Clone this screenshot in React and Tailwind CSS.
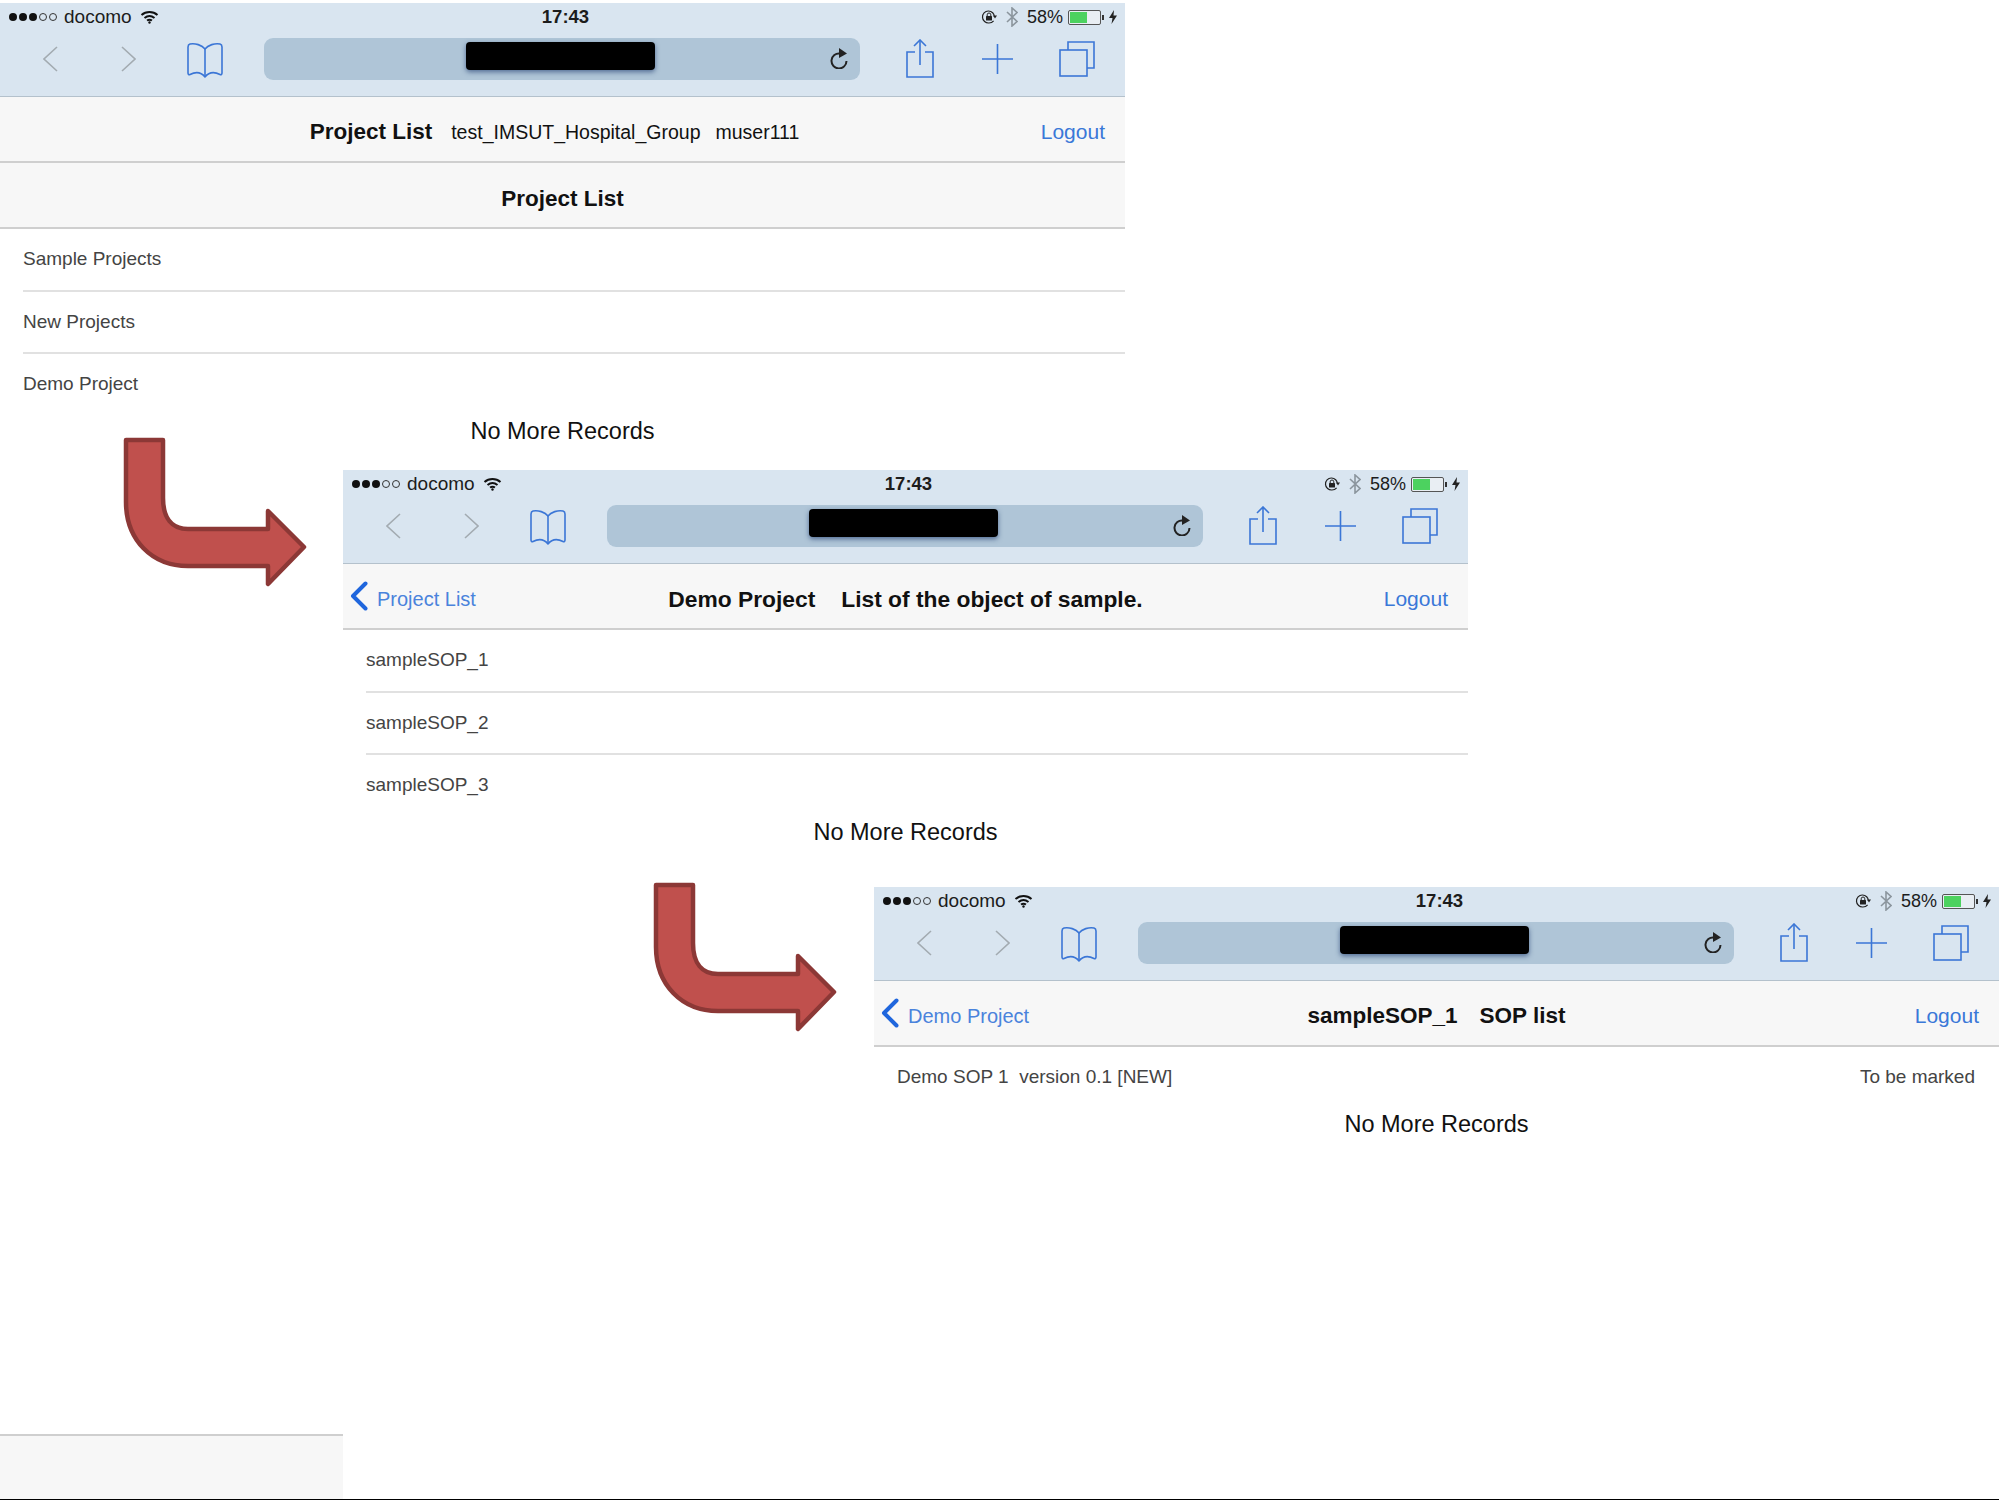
import React from "react";

const ChevronIcon = ({ flip = false }) => (
  <svg width="15" height="26" viewBox="0 0 15 26" fill="none" stroke="#a3abb1" strokeWidth="1.6">
    <polyline points={flip ? "1,1 14,13 1,25" : "14,1 1,13 14,25"} />
  </svg>
);

const BookIcon = () => (
  <svg width="38" height="38" viewBox="0 0 38 38" fill="none" stroke="#3b76d6" strokeWidth="1.6" strokeLinejoin="round">
    <path d="M19 7C16 3 9 1 4 2C2.500 2.500 2 3 2 5V31C2 32.500 3 33 4 32.500C9 30 15 30 19 35C23 30 29 30 34 32.500C35 33 36 32.500 36 31V5C36 3 35.500 2.500 34 2C29 1 22 3 19 7Z" />
    <path d="M19 7V35" />
  </svg>
);

const ReloadIcon = () => (
  <svg width="20" height="22" viewBox="0 0 20 22" fill="none">
    <path d="M11 6.500A7.500 7.500 0 1 0 17.500 14" stroke="#222" strokeWidth="2" />
    <polygon points="10,1 18,6.500 10,11" fill="#222" />
  </svg>
);

const ShareIcon = () => (
  <svg width="28" height="39" viewBox="0 0 28 39" fill="none" stroke="#3b76d6" strokeWidth="1.6">
    <path d="M9 13H1V38H27V13H19" />
    <path d="M14 1V26" />
    <path d="M8 7L14 1L20 7" />
  </svg>
);

const PlusIcon = () => (
  <svg width="31" height="30" viewBox="0 0 31 30" fill="none" stroke="#3b76d6" strokeWidth="1.6">
    <path d="M0 15H31M15.500 0V30" />
  </svg>
);

const TabsIcon = () => (
  <svg width="36" height="36" viewBox="0 0 36 36" fill="none" stroke="#3b76d6" strokeWidth="1.6">
    <rect x="1" y="9" width="27" height="26" />
    <path d="M9 9V1H35V27H28" />
  </svg>
);

const WifiIcon = () => (
  <svg width="19" height="14" viewBox="0 0 18 14" fill="none" stroke="#111" strokeWidth="2">
    <path d="M1 5C5.500 1 12.500 1 17 5" />
    <path d="M4 8C7 5.500 11 5.500 14 8" />
    <path d="M6.500 10.500C8 9.500 10 9.500 11.500 10.500" />
    <circle cx="9" cy="12.500" r="1.200" fill="#111" stroke="none" />
  </svg>
);

const RotationLockIcon = () => (
  <svg width="16" height="16" viewBox="0 0 16 16" fill="none">
    <path d="M13.500 8A6 6 0 1 0 8 14C10 14 11.500 13.200 12.600 11.800" stroke="#222" strokeWidth="1.2" />
    <polygon points="12,6.500 16,6.500 14,9.500" fill="#222" />
    <rect x="5" y="7" width="6" height="4.500" rx="0.5" fill="#222" />
    <path d="M6.200 7V5.800A1.800 1.800 0 0 1 9.800 5.800V7" stroke="#222" strokeWidth="1" />
  </svg>
);

const BluetoothIcon = () => (
  <svg width="12" height="20" viewBox="0 0 12 20" fill="none" stroke="#8b959d" strokeWidth="1.6">
    <path d="M1 5L11 14.500L6 19V1L11 5.500L1 15" />
  </svg>
);

const BoltIcon = () => (
  <svg width="8" height="14" viewBox="0 0 8 14" fill="#222">
    <polygon points="5,0 0,8 3.500,8 2.500,14 8,5.500 4.500,5.500" />
  </svg>
);

const Battery = () => (
  <div className="flex items-center">
    <div className="w-[33px] h-[15px] border border-[#555] rounded-[2px] p-px bg-[#e9eef3]">
      <div className="h-full w-[58%] bg-[#4cd25f]" />
    </div>
    <div className="w-[2px] h-[5px] bg-[#333] ml-px" />
  </div>
);

const SignalDots = () => (
  <div className="flex items-center gap-[2px]">
    <span className="w-[8px] h-[8px] rounded-full bg-[#111]" />
    <span className="w-[8px] h-[8px] rounded-full bg-[#111]" />
    <span className="w-[8px] h-[8px] rounded-full bg-[#111]" />
    <span className="w-[8px] h-[8px] rounded-full border border-[#333]" />
    <span className="w-[8px] h-[8px] rounded-full border border-[#333]" />
  </div>
);

const BrowserChrome = () => (
  <div className="h-[94px] bg-[#d9e5f0] border-b border-[#b4c1cc]">
    <div className="h-[28px] grid grid-cols-[1fr_auto_1fr] items-center text-[18px] text-[#1c1c1c] pl-[9px] pr-[8px]">
      <div className="flex items-center">
        <SignalDots />
        <span className="ml-[7px] text-[19px]">docomo</span>
        <span className="ml-[8px]">
          <WifiIcon />
        </span>
      </div>
      <div className="font-bold text-[18.500px] pl-[5px]">17:43</div>
      <div className="flex items-center justify-end">
        <RotationLockIcon />
        <span className="ml-[9px]">
          <BluetoothIcon />
        </span>
        <span className="ml-[9px]">58%</span>
        <span className="ml-[5px]">
          <Battery />
        </span>
        <span className="ml-[5px]">
          <BoltIcon />
        </span>
      </div>
    </div>
    <div className="mt-[7px] h-[42px] flex items-center pl-[43px]">
      <ChevronIcon />
      <div className="ml-[63px]">
        <ChevronIcon flip />
      </div>
      <div className="ml-[50px] mt-[4px]">
        <BookIcon />
      </div>
      <div className="ml-[40px] w-[596px] h-[42px] rounded-[9px] bg-[#afc5d7] flex items-start">
        <div className="ml-[202px] mt-[4px] w-[189px] h-[28px] rounded-[4px] bg-black shadow-[0_2px_5px_rgba(30,60,110,0.65)]" />
        <div className="ml-auto mr-[11px] mt-[9px]">
          <ReloadIcon />
        </div>
      </div>
      <div className="ml-[46px] mb-[2px]">
        <ShareIcon />
      </div>
      <div className="ml-[48px]">
        <PlusIcon />
      </div>
      <div className="ml-[46px]">
        <TabsIcon />
      </div>
    </div>
  </div>
);

const BackLink = ({ label }) => (
  <a className="flex items-center pl-[7px] text-[20px] text-[#4a83dc]">
    <svg width="18" height="30" viewBox="0 0 18 30" fill="none" stroke="#1f66dd" strokeWidth="4" strokeLinecap="round" strokeLinejoin="round">
      <polyline points="15.500,2.500 3,15 15.500,27.500" />
    </svg>
    <span className="ml-[9px] pt-[6px]">{label}</span>
  </a>
);

const NavBar = ({ back, children }) => (
  <div className="h-[66px] bg-[#f7f7f7] border-b-2 border-[#cfcfcf] grid grid-cols-[1fr_auto_1fr] items-center text-[#111]">
    <div>{back && <BackLink label={back} />}</div>
    <div className="pt-[6px]">{children}</div>
    <a className="justify-self-end pr-[20px] pt-[6px] text-[21px] text-[#3a78d8]">Logout</a>
  </div>
);

const ListRow = ({ label, right, first, last }) => {
  const height = first ? "h-[63px]" : last ? "h-[60px]" : "h-[62px]";
  return (
    <div className="pl-[23px]">
      <div className={`${height} flex items-center justify-between pr-[24px] text-[19px] text-[#444] ${last ? "" : "border-b-2 border-[#e1e1e1]"}`}>
        <span className="whitespace-pre">{label}</span>
        {right && <span>{right}</span>}
      </div>
    </div>
  );
};

const NoMore = () => (
  <div className="mt-[3px] text-center text-[23.500px] leading-[28px] text-[#111]">No More Records</div>
);

const BrowserWindow = ({ className, children }) => (
  <div className={`absolute w-[1125px] ${className}`}>
    <BrowserChrome />
    {children}
  </div>
);

const CurvedArrow = ({ className }) => (
  <svg className={`absolute ${className}`} width="188" height="154" viewBox="0 0 188 154" fill="#c0504d" stroke="#8c3836" strokeWidth="4.500" strokeLinejoin="round">
    <path d="M4 4H41V62C41 82 50 93 66 93H146V75L182 111L146 148V130H66C30 130 4 104 4 66Z" />
  </svg>
);

export default function App() {
  return (
    <div className="relative w-[1999px] h-[1500px] bg-white overflow-hidden flex flex-col justify-end font-['Liberation_Sans',Arial,sans-serif]">
      <BrowserWindow className="left-0 top-[3px]">
        <NavBar>
          <div className="flex items-baseline pr-[16px]">
            <span className="font-bold text-[22.500px]">Project List</span>
            <span className="ml-[19px] text-[19.500px]">test_IMSUT_Hospital_Group</span>
            <span className="ml-[15px] text-[19.500px]">muser111</span>
          </div>
        </NavBar>
        <div className="h-[66px] pt-[8px] bg-[#f7f7f7] border-b-2 border-[#cfcfcf] flex items-center justify-center font-bold text-[22.500px] text-[#111]">
          Project List
        </div>
        <ListRow label="Sample Projects" first />
        <ListRow label="New Projects" />
        <ListRow label="Demo Project" last />
        <NoMore />
      </BrowserWindow>

      <CurvedArrow className="left-[122px] top-[436px]" />

      <BrowserWindow className="left-[343px] top-[470px]">
        <NavBar back="Project List">
          <div className="flex items-baseline font-bold text-[22.800px]">
            <span>Demo Project</span>
            <span className="ml-[26px]">List of the object of sample.</span>
          </div>
        </NavBar>
        <ListRow label="sampleSOP_1" first />
        <ListRow label="sampleSOP_2" />
        <ListRow label="sampleSOP_3" last />
        <NoMore />
      </BrowserWindow>

      <CurvedArrow className="left-[652px] top-[881px]" />

      <BrowserWindow className="left-[874px] top-[887px]">
        <NavBar back="Demo Project">
          <div className="flex items-baseline font-bold text-[22.500px]">
            <span>sampleSOP_1</span>
            <span className="ml-[22px]">SOP list</span>
          </div>
        </NavBar>
        <ListRow label="Demo SOP 1  version 0.1 [NEW]" right="To be marked" last />
        <NoMore />
      </BrowserWindow>

      <div className="w-[343px] h-[65px] bg-[#f7f7f7] border-t-2 border-[#cfcfcf]" />
      <div className="h-px bg-black" />
    </div>
  );
}
